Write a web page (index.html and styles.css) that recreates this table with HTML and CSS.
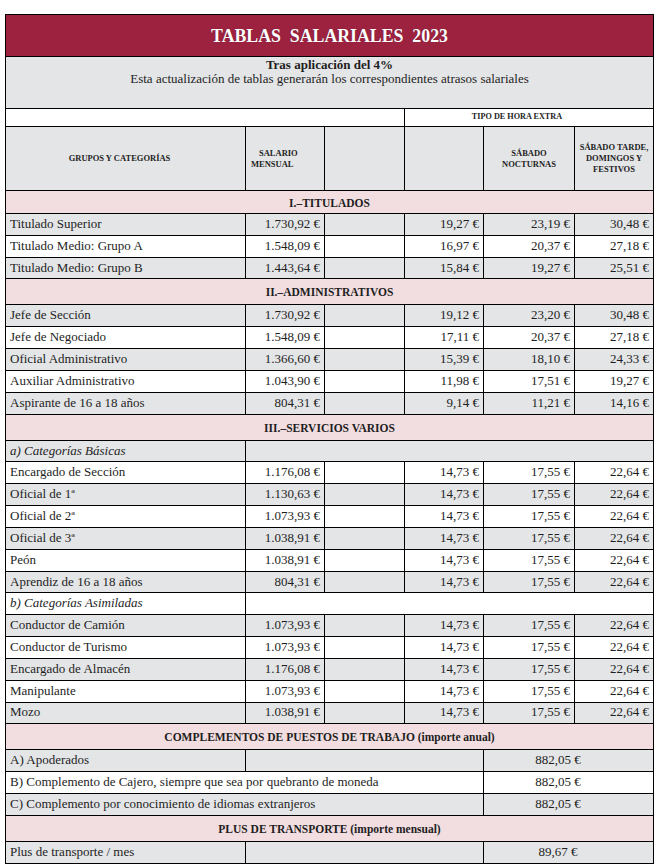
FILE: index.html
```html
<!DOCTYPE html>
<html lang="es">
<head>
<meta charset="utf-8">
<title>Tablas Salariales 2023</title>
<link rel="stylesheet" href="styles.css">
</head>
<body>
<div class="sheet">
<table class="salaries">
<colgroup><col class="c1"><col class="c2"><col class="c3"><col class="c4"><col class="c5"><col class="c6"></colgroup>
<tr class="title-row"><td colspan="6" class="title">TABLAS&nbsp; SALARIALES&nbsp; 2023</td></tr>
<tr class="intro-row"><td colspan="6" class="intro"><div class="intro-strong">Tras aplicación del 4%</div><div>Esta actualización de tablas generarán los correspondientes atrasos salariales</div></td></tr>
<tr class="tipo-row"><td colspan="3"></td><td colspan="3" class="tipo">TIPO DE HORA EXTRA</td></tr>
<tr class="head-row"><th class="h-groups">GRUPOS Y CATEGORÍAS</th><th class="h-salario"><span class="indent">SALARIO</span><br>MENSUAL</th><th></th><th></th><th>SÁBADO<br>NOCTURNAS</th><th>SÁBADO TARDE,<br>DOMINGOS Y<br>FESTIVOS</th></tr>

<tr class="row s first"><td colspan="6" class="section">I.–TITULADOS</td></tr>
<tr class="row g"><td class="name">Titulado Superior</td><td class="num">1.730,92 €</td><td></td><td class="num">19,27 €</td><td class="num">23,19 €</td><td class="num">30,48 €</td></tr>
<tr class="row w"><td class="name">Titulado Medio: Grupo A</td><td class="num">1.548,09 €</td><td></td><td class="num">16,97 €</td><td class="num">20,37 €</td><td class="num">27,18 €</td></tr>
<tr class="row g"><td class="name">Titulado Medio: Grupo B</td><td class="num">1.443,64 €</td><td></td><td class="num">15,84 €</td><td class="num">19,27 €</td><td class="num">25,51 €</td></tr>

<tr class="row s"><td colspan="6" class="section">II.–ADMINISTRATIVOS</td></tr>
<tr class="row g"><td class="name">Jefe de Sección</td><td class="num">1.730,92 €</td><td></td><td class="num">19,12 €</td><td class="num">23,20 €</td><td class="num">30,48 €</td></tr>
<tr class="row w"><td class="name">Jefe de Negociado</td><td class="num">1.548,09 €</td><td></td><td class="num">17,11 €</td><td class="num">20,37 €</td><td class="num">27,18 €</td></tr>
<tr class="row g"><td class="name">Oficial Administrativo</td><td class="num">1.366,60 €</td><td></td><td class="num">15,39 €</td><td class="num">18,10 €</td><td class="num">24,33 €</td></tr>
<tr class="row w"><td class="name">Auxiliar Administrativo</td><td class="num">1.043,90 €</td><td></td><td class="num">11,98 €</td><td class="num">17,51 €</td><td class="num">19,27 €</td></tr>
<tr class="row g"><td class="name">Aspirante de 16 a 18 años</td><td class="num">804,31 €</td><td></td><td class="num">9,14 €</td><td class="num">11,21 €</td><td class="num">14,16 €</td></tr>

<tr class="row s"><td colspan="6" class="section">III.–SERVICIOS VARIOS</td></tr>
<tr class="row g"><td class="name sub">a) Categorías Básicas</td><td colspan="5"></td></tr>
<tr class="row w"><td class="name">Encargado de Sección</td><td class="num">1.176,08 €</td><td></td><td class="num">14,73 €</td><td class="num">17,55 €</td><td class="num">22,64 €</td></tr>
<tr class="row g"><td class="name">Oficial de 1ª</td><td class="num">1.130,63 €</td><td></td><td class="num">14,73 €</td><td class="num">17,55 €</td><td class="num">22,64 €</td></tr>
<tr class="row w"><td class="name">Oficial de 2ª</td><td class="num">1.073,93 €</td><td></td><td class="num">14,73 €</td><td class="num">17,55 €</td><td class="num">22,64 €</td></tr>
<tr class="row g"><td class="name">Oficial de 3ª</td><td class="num">1.038,91 €</td><td></td><td class="num">14,73 €</td><td class="num">17,55 €</td><td class="num">22,64 €</td></tr>
<tr class="row w"><td class="name">Peón</td><td class="num">1.038,91 €</td><td></td><td class="num">14,73 €</td><td class="num">17,55 €</td><td class="num">22,64 €</td></tr>
<tr class="row g"><td class="name">Aprendiz de 16 a 18 años</td><td class="num">804,31 €</td><td></td><td class="num">14,73 €</td><td class="num">17,55 €</td><td class="num">22,64 €</td></tr>
<tr class="row w"><td class="name sub">b) Categorías Asimiladas</td><td colspan="5"></td></tr>
<tr class="row g"><td class="name">Conductor de Camión</td><td class="num">1.073,93 €</td><td></td><td class="num">14,73 €</td><td class="num">17,55 €</td><td class="num">22,64 €</td></tr>
<tr class="row w"><td class="name">Conductor de Turismo</td><td class="num">1.073,93 €</td><td></td><td class="num">14,73 €</td><td class="num">17,55 €</td><td class="num">22,64 €</td></tr>
<tr class="row g"><td class="name">Encargado de Almacén</td><td class="num">1.176,08 €</td><td></td><td class="num">14,73 €</td><td class="num">17,55 €</td><td class="num">22,64 €</td></tr>
<tr class="row w"><td class="name">Manipulante</td><td class="num">1.073,93 €</td><td></td><td class="num">14,73 €</td><td class="num">17,55 €</td><td class="num">22,64 €</td></tr>
<tr class="row g"><td class="name">Mozo</td><td class="num">1.038,91 €</td><td></td><td class="num">14,73 €</td><td class="num">17,55 €</td><td class="num">22,64 €</td></tr>

<tr class="row s"><td colspan="6" class="section">COMPLEMENTOS DE PUESTOS DE TRABAJO (importe anual)</td></tr>
<tr class="row g"><td class="name">A) Apoderados</td><td colspan="3"></td><td colspan="2" class="amount">882,05 €</td></tr>
<tr class="row w"><td colspan="4" class="name">B) Complemento de Cajero, siempre que sea por quebranto de moneda</td><td colspan="2" class="amount">882,05 €</td></tr>
<tr class="row g"><td colspan="4" class="name">C) Complemento por conocimiento de idiomas extranjeros</td><td colspan="2" class="amount">882,05 €</td></tr>

<tr class="row s"><td colspan="6" class="section">PLUS DE TRANSPORTE (importe mensual)</td></tr>
<tr class="row g"><td class="name">Plus de transporte / mes</td><td colspan="3"></td><td colspan="2" class="amount">89,67 €</td></tr>
</table>
</div>
</body>
</html>
```

FILE: styles.css
```css
body {
  margin: 0;
  background: #ffffff;
  font-family: "Liberation Serif", "Times New Roman", serif;
  color: #1e1e1e;
}

.sheet {
  padding: 14px 0 0 5px;
}

.salaries {
  border-collapse: collapse;
  table-layout: fixed;
  width: 648px;
}

.c1 { width: 240px; }
.c2 { width: 79px; }
.c3 { width: 80px; }
.c4 { width: 79px; }
.c5 { width: 91px; }
.c6 { width: 79px; }

.salaries td,
.salaries th {
  border: 1px solid #000;
  padding: 0 4px;
}

.title-row { height: 42px; }
.salaries .title {
  background: #9c2240;
  color: #ffffff;
  text-align: center;
  font-weight: bold;
  font-size: 17.8px;
  padding-top: 1px;
  text-shadow: 0 0 1px rgba(0, 0, 0, 0.35);
}

.intro-row { height: 52px; }
.salaries .intro {
  background: #e4e5e7;
  text-align: center;
  vertical-align: top;
  font-size: 13px;
  line-height: 14px;
  padding-top: 1px;
}
.intro-strong { font-weight: bold; }

.tipo-row { height: 18px; }
.salaries .tipo {
  text-align: center;
  font-weight: bold;
  font-size: 8.2px;
  padding-right: 28px;
  padding-bottom: 2px;
}

.head-row { height: 64px; }
.head-row th {
  background: #e4e5e7;
  font-size: 8.5px;
  line-height: 11px;
  font-weight: bold;
  text-align: center;
}
.head-row .h-groups { padding-right: 16px; }
.head-row .h-salario { text-align: left; padding-left: 5px; }
.indent { padding-left: 8px; }

.row { height: 21.84px; }
.s { height: 26px; }
.s.first { height: 23px; }

.salaries .row td {
  font-size: 13px;
  line-height: 15px;
  padding-bottom: 2px;
}
.g td { background: #e4e5e7; }
.w td { background: #ffffff; }
.s td { background: #f2dde0; }

.salaries .row .section {
  text-align: center;
  font-weight: bold;
  font-size: 11.5px;
  padding-top: 2px;
  padding-bottom: 0;
}

.name { text-align: left; }
.sub { font-style: italic; }
.num { text-align: right; }
.salaries .amount { text-align: center; padding-right: 25px; }
```
